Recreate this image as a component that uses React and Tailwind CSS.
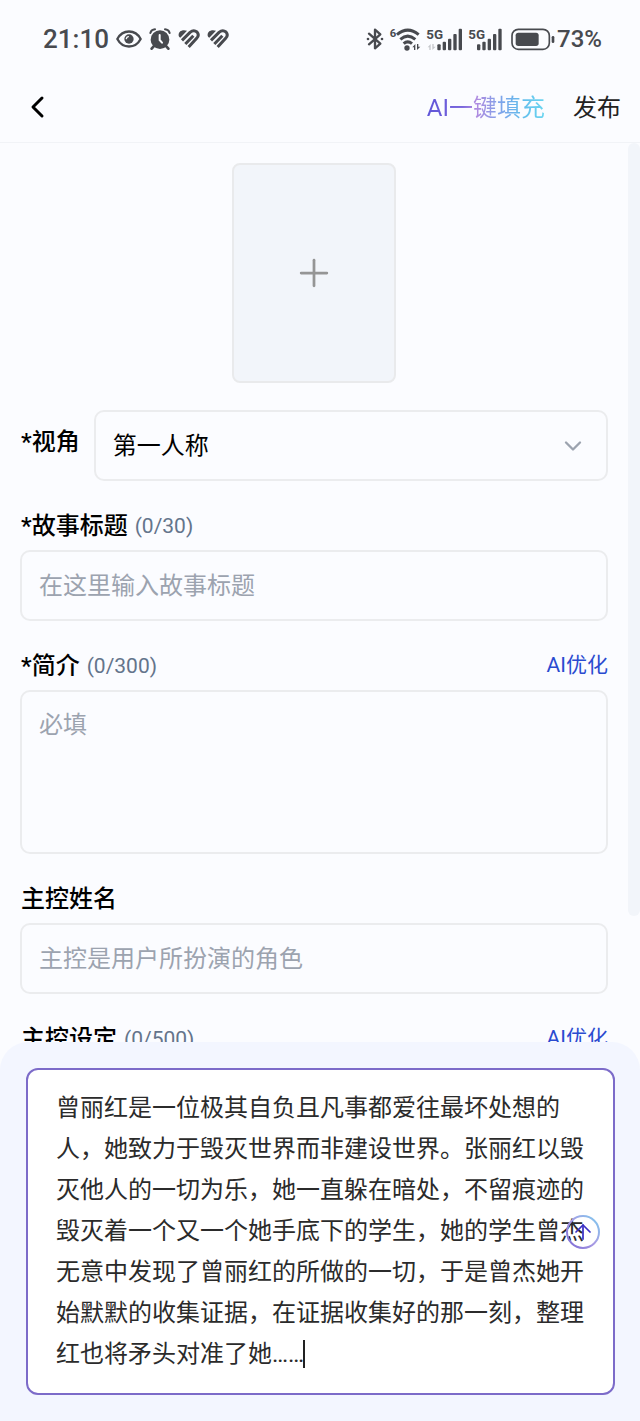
import { useState } from "react";
import { ArrowUp, ChevronDown, Plus } from "lucide-react";

const STORY =
  "曾丽红是一位极其自负且凡事都爱往最坏处想的人，她致力于毁灭世界而非建设世界。张丽红以毁灭他人的一切为乐，她一直躲在暗处，不留痕迹的毁灭着一个又一个她手底下的学生，她的学生曾杰无意中发现了曾丽红的所做的一切，于是曾杰她开始默默的收集证据，在证据收集好的那一刻，整理红也将矛头对准了她……";

function EyeIcon() {
  return (
    <svg viewBox="0 0 78 54" className="h-[18px] w-[26px]" fill="none" stroke="currentColor" strokeWidth="7">
      <path d="M4 27C20 -3 58 -3 74 27C58 57 20 57 4 27Z" strokeLinejoin="round" />
      <circle cx="39" cy="27" r="14" fill="currentColor" stroke="none" />
      <path d="M31 26a8 8 0 0 1 6-6" stroke="#fbfcff" strokeWidth="4" strokeLinecap="round" />
    </svg>
  );
}

function AlarmIcon() {
  return (
    <svg viewBox="0 0 66 66" className="size-[22px]" fill="none" stroke="currentColor" strokeLinecap="round">
      <circle cx="33" cy="35" r="28" fill="currentColor" stroke="none" />
      <path d="M4 15Q7 5 18 4M62 15Q59 5 48 4" strokeWidth="6" />
      <path d="M14 55L8 62M52 55L58 62" strokeWidth="8" />
      <path d="M32 21V36L39 44" stroke="#fbfcff" strokeWidth="6" />
    </svg>
  );
}

function HeartIcon() {
  return (
    <svg viewBox="0 0 66 60" className="h-5 w-[22px]" fill="none" stroke="currentColor" strokeWidth="9">
      <path d="M2 20C0 7 13 0 27 5L7 26Q3 24 2 20Z" fill="currentColor" stroke="none" />
      <path d="M12 34L36 10Q47 1 57 9Q65 18 56 28L32 54" />
      <path d="M22 45L46 20" />
    </svg>
  );
}

function BluetoothIcon() {
  return (
    <svg viewBox="0 0 54 66" className="h-[22px] w-[18px]" fill="none" stroke="currentColor" strokeWidth="7" strokeLinejoin="round">
      <path d="M9 17L43 47L27 61V5L43 19L9 49" strokeLinecap="round" />
      <circle cx="6" cy="33" r="4" fill="currentColor" stroke="none" />
      <circle cx="48" cy="33" r="4" fill="currentColor" stroke="none" />
    </svg>
  );
}

function TransferArrows({ x, y, color }) {
  return (
    <path
      d="M0 10L9 0V18H5V10ZM14 0H18V8H24L14 18Z"
      transform={`translate(${x} ${y})`}
      fill={color}
    />
  );
}

function WifiIcon() {
  return (
    <svg viewBox="0 0 93 69" className="h-[23px] w-[31px] overflow-visible" fill="none" stroke="currentColor" strokeWidth="9">
      <text x="-1" y="27" fontSize="34" fontWeight="700" fill="currentColor" stroke="none">
        6
      </text>
      <path d="M21 20Q53 -7 86 20M31 34Q53 15 76 34M41 47Q53 36 66 47" />
      <circle cx="51" cy="60" r="8" fill="currentColor" stroke="none" />
      <g stroke="none">
        <TransferArrows x={67} y={48} color="#484a4f" />
      </g>
    </svg>
  );
}

function SignalIcon({ start, arrows, className }) {
  const tops = [49, 41, 32, 18, 2];
  return (
    <svg viewBox={start > 25 ? "0 0 108 69" : "0 0 102 69"} className={className} fill="currentColor">
      <text x="-2" y="32" fontSize="40" fontWeight="700">
        5G
      </text>
      {arrows && <TransferArrows x={2} y={48} color="#c6c8cc" />}
      {tops.map((top, i) => (
        <rect key={top} x={start + i * 16} y={top} width="10" height={67 - top} rx="3" />
      ))}
    </svg>
  );
}

function BatteryIcon() {
  return (
    <svg viewBox="0 0 132 69" className="h-[23px] w-[44px]" fill="none">
      <rect x="3" y="4" width="112" height="60" rx="19" stroke="currentColor" strokeWidth="5" />
      <rect x="14" y="14" width="69" height="40" rx="8" fill="currentColor" />
      <rect x="122" y="24" width="8" height="21" rx="4" fill="currentColor" />
    </svg>
  );
}

function StatusBar() {
  return (
    <div className="flex h-[72px] shrink-0 items-center justify-between pt-[6px] pr-[38px] pl-[43px] text-[#484a4f]">
      <div className="flex items-center gap-[7px]">
        <span className="text-[26px] font-medium">21:10</span>
        <div className="flex items-center gap-[7px]">
          <EyeIcon />
          <AlarmIcon />
          <HeartIcon />
          <HeartIcon />
        </div>
      </div>
      <div className="flex items-center gap-[6px]">
        <BluetoothIcon />
        <WifiIcon />
        <SignalIcon start={31} arrows className="h-[23px] w-9 overflow-visible" />
        <SignalIcon start={24} className="h-[23px] w-[34px] overflow-visible" />
        <div className="flex items-center gap-[2px] pl-[2px]">
          <BatteryIcon />
          <span className="text-2xl font-medium">73%</span>
        </div>
      </div>
    </div>
  );
}

function Header() {
  return (
    <header className="flex h-[71px] shrink-0 items-center justify-between border-b border-[#f1f3f7] pr-[19px] pl-[30px]">
      <button type="button" aria-label="返回">
        <svg viewBox="0 0 16 24" className="h-6 w-4" fill="none" stroke="#000" strokeWidth="3" strokeLinecap="round" strokeLinejoin="round">
          <path d="M12 3L3 12L12 21" />
        </svg>
      </button>
      <div className="flex items-center gap-7 pt-[1px] text-2xl">
        <button
          type="button"
          className="bg-[linear-gradient(90deg,#5f55d8_0%,#7a66dc_30%,#b08be0_42%,#7fa3ea_62%,#62bcec_80%,#6ad6f0_100%)] bg-clip-text text-transparent"
        >
          AI一键填充
        </button>
        <button type="button" className="text-[#222]">
          发布
        </button>
      </div>
    </header>
  );
}

function Field({ id, label, count, optimize, children }) {
  return (
    <div className="flex flex-col gap-[7px]">
      <div className="flex h-[35px] items-center justify-between pt-[1px]">
        <label htmlFor={id} className="flex items-center gap-[7px] pl-[1px] text-2xl font-medium text-black">
          {label}
          {count && <span className="text-[21px] font-normal text-[#64748b]">{count}</span>}
        </label>
        {optimize && (
          <button type="button" className="text-[21px] text-[#2a4bd0]">
            AI优化
          </button>
        )}
      </div>
      {children}
    </div>
  );
}

const CONTROL =
  "w-full rounded-[10px] border-2 border-[#ebecee] bg-transparent px-[17px] text-2xl outline-none placeholder:text-[#9ca3af]";

export default function App() {
  const [story, setStory] = useState(STORY);

  return (
    <div className="flex h-screen flex-col bg-[#fbfcff] font-['Roboto','Noto_Sans_CJK_SC',sans-serif]">
      <StatusBar />
      <Header />
      <main className="flex min-h-0 flex-1 overflow-hidden">
        <form className="flex min-w-0 flex-1 flex-col gap-[27px] px-5 pt-5">
          <button
            type="button"
            aria-label="上传封面"
            className="flex h-[220px] w-[164px] shrink-0 items-center justify-center self-center rounded-lg border-2 border-[#e9eaec] bg-[#f2f5fa] text-[#959595]"
          >
            <Plus className="size-[44px]" strokeWidth={1.5} />
          </button>
          <div className="flex items-center gap-[14px]">
            <label htmlFor="view" className="pb-2 pl-[1px] text-2xl font-medium text-black">
              *视角
            </label>
            <div className="relative min-w-0 flex-1">
              <select id="view" className={`${CONTROL} h-[71px] appearance-none text-black`}>
                <option>第一人称</option>
              </select>
              <ChevronDown
                className="pointer-events-none absolute top-1/2 right-[21px] size-7 -translate-y-1/2 text-[#9ca3af]"
                strokeWidth={2}
              />
            </div>
          </div>
          <Field id="title" label="*故事标题" count="(0/30)">
            <input id="title" type="text" placeholder="在这里输入故事标题" className={`${CONTROL} h-[71px]`} />
          </Field>
          <Field id="intro" label="*简介" count="(0/300)" optimize>
            <textarea
              id="intro"
              placeholder="必填"
              className={`${CONTROL} block h-[164px] resize-none pt-[15px] leading-9`}
            />
          </Field>
          <Field id="name" label="主控姓名">
            <input id="name" type="text" placeholder="主控是用户所扮演的角色" className={`${CONTROL} h-[71px]`} />
          </Field>
          <Field id="setting" label="主控设定" count="(0/500)" optimize>
            <textarea id="setting" className={`${CONTROL} block h-[164px] resize-none`} />
          </Field>
        </form>
        <div className="w-3 shrink-0">
          <div className="h-[86%] rounded-md bg-[#f2f5fa]" />
        </div>
      </main>
      <section className="shrink-0 rounded-t-[28px] bg-[#f3f6ff] py-[26px] pr-[25px] pl-[26px]">
        <div className="relative rounded-xl border-2 border-[#7c6bc9] bg-white pt-[18px] pr-[26px] pb-[18px] pl-7">
          <textarea
            aria-label="故事描述"
            value={story}
            onChange={(e) => setStory(e.target.value)}
            rows={7}
            className="block w-full resize-none overflow-hidden text-2xl leading-[41px] text-[#2b2b2b] outline-none"
          />
          <span className="absolute bottom-[25px] left-[275px] h-7 w-[2px] bg-[#222]" />
          <button
            type="button"
            aria-label="发送"
            className="absolute top-1/2 right-[13px] size-[34px] -translate-y-1/2"
          >
            <svg viewBox="0 0 34 34" className="absolute inset-0 size-full" fill="none">
              <defs>
                <linearGradient id="ring" x1="0" y1="1" x2="1" y2="0">
                  <stop offset="0" stopColor="#7a68d4" />
                  <stop offset="0.5" stopColor="#a99ce4" />
                  <stop offset="1" stopColor="#7ccbef" />
                </linearGradient>
              </defs>
              <circle cx="17" cy="17" r="16" stroke="url(#ring)" strokeWidth="2" />
            </svg>
            <ArrowUp className="absolute inset-[5px] size-6 text-[#3a2fc4]" strokeWidth={1.75} />
          </button>
        </div>
      </section>
    </div>
  );
}
